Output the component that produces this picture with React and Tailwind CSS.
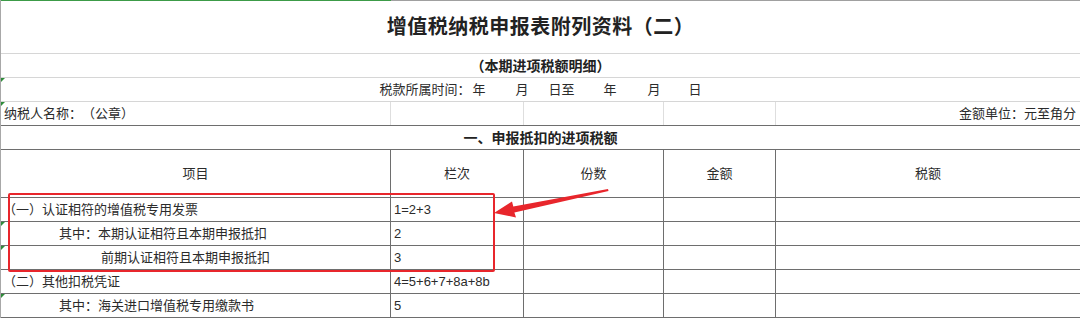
import React from "react";

const rows = [
  { label: "（一）认证相符的增值税专用发票", indent: "pl-[2px]", no: "1=2+3", mark: false },
  { label: "其中：本期认证相符且本期申报抵扣", indent: "pl-[58px]", no: "2", mark: true },
  { label: "前期认证相符且本期申报抵扣", indent: "pl-[100px]", no: "3", mark: true },
  { label: "（二）其他扣税凭证", indent: "pl-[2px]", no: "4=5+6+7+8a+8b", mark: false },
  { label: "其中：海关进口增值税专用缴款书", indent: "pl-[58px]", no: "5", mark: true },
];

// little green corner mark, like excel's error flag
function Flag() {
  return (
    <span className="absolute left-0 top-0 w-0 h-0 border-t-[4px] border-r-[4px] border-t-[#2e8b3a] border-r-transparent"></span>
  );
}

export default function App() {
  return (
    <div className="w-[1080px] h-[318px] overflow-hidden bg-white text-[#2b2b2b] font-['Liberation_Sans','Noto_Sans_CJK_SC',sans-serif] text-[13px] [text-spacing-trim:space-all]">
      <div className="relative border-l border-[#a8a8a8]">
        {/* top edge */}
        <div className="flex h-px">
          <div className="w-[390px] bg-[#3c9b48]"></div>
          <div className="flex-1 bg-[#a0a0a0]"></div>
        </div>

        {/* title */}
        <div className="h-[53px] border-b border-[#d6d6d6] flex items-center justify-center pb-[3px]">
          <span className="text-[20px] font-bold font-['Noto_Sans_CJK_SC',sans-serif] text-[#222] tracking-[0.5px]">
            增值税纳税申报表附列资料（二）
          </span>
        </div>

        {/* subtitle */}
        <div className="h-[24px] border-b border-[#d6d6d6] flex items-center justify-center">
          <span className="text-[14px] font-bold font-['Noto_Sans_CJK_SC',sans-serif] text-[#222]">（本期进项税额明细）</span>
        </div>

        {/* period */}
        <div className="relative h-[24px] border-b border-[#d6d6d6] flex items-center justify-center">
          <Flag />
          <span>税款所属时间：</span>
          <span className="ml-[2px]">年</span>
          <span className="ml-[30px]">月</span>
          <span className="ml-[20px]">日至</span>
          <span className="ml-[29px]">年</span>
          <span className="ml-[31px]">月</span>
          <span className="ml-[28px]">日</span>
        </div>

        {/* taxpayer */}
        <div className="relative h-[24px] border-b border-[#6e6e6e] flex">
          <Flag />
          <div className="w-[390px] border-r border-[#dedede] flex items-center pl-[3px]">纳税人名称：（公章）</div>
          <div className="w-[133px] border-r border-[#dedede]"></div>
          <div className="w-[140px] border-r border-[#dedede]"></div>
          <div className="w-[112px] border-r border-[#dedede]"></div>
          <div className="flex-1 flex items-center justify-end pr-[4px]">金额单位：元至角分</div>
        </div>

        {/* section */}
        <div className="h-[24px] border-b border-[#6e6e6e] flex items-center justify-center">
          <span className="text-[14px] font-bold font-['Noto_Sans_CJK_SC',sans-serif] text-[#222]">一、申报抵扣的进项税额</span>
        </div>

        {/* header */}
        <div className="h-[48px] border-b border-[#6e6e6e] flex">
          <div className="w-[390px] border-r border-[#6e6e6e] flex items-center justify-center">项目</div>
          <div className="w-[133px] border-r border-[#6e6e6e] flex items-center justify-center">栏次</div>
          <div className="w-[140px] border-r border-[#6e6e6e] flex items-center justify-center">份数</div>
          <div className="w-[112px] border-r border-[#6e6e6e] flex items-center justify-center">金额</div>
          <div className="flex-1 flex items-center justify-center">税额</div>
        </div>

        {rows.map((r) => (
          <div key={r.no} className="relative h-[24px] border-b border-[#6e6e6e] flex">
            {r.mark && <Flag />}
            <div className={`w-[390px] border-r border-[#6e6e6e] flex items-center ${r.indent}`}>{r.label}</div>
            <div className="w-[133px] border-r border-[#6e6e6e] flex items-center pl-[3px]">{r.no}</div>
            <div className="w-[140px] border-r border-[#6e6e6e]"></div>
            <div className="w-[112px] border-r border-[#6e6e6e]"></div>
            <div className="flex-1"></div>
          </div>
        ))}

        {/* highlight box */}
        <div className="absolute left-[7px] top-[193px] w-[487px] h-[79px] border-2 border-[#e8262c] rounded-[2px]"></div>

        {/* arrow */}
        <svg className="absolute left-[490px] top-[184px]" width="125" height="36" viewBox="0 0 125 36">
          <polygon
            points="3,29 21,17.5 22.3,22.6 117,5 117.5,7 23.4,28.4 25,33.5"
            fill="#e8262c"
          />
        </svg>
      </div>
    </div>
  );
}
